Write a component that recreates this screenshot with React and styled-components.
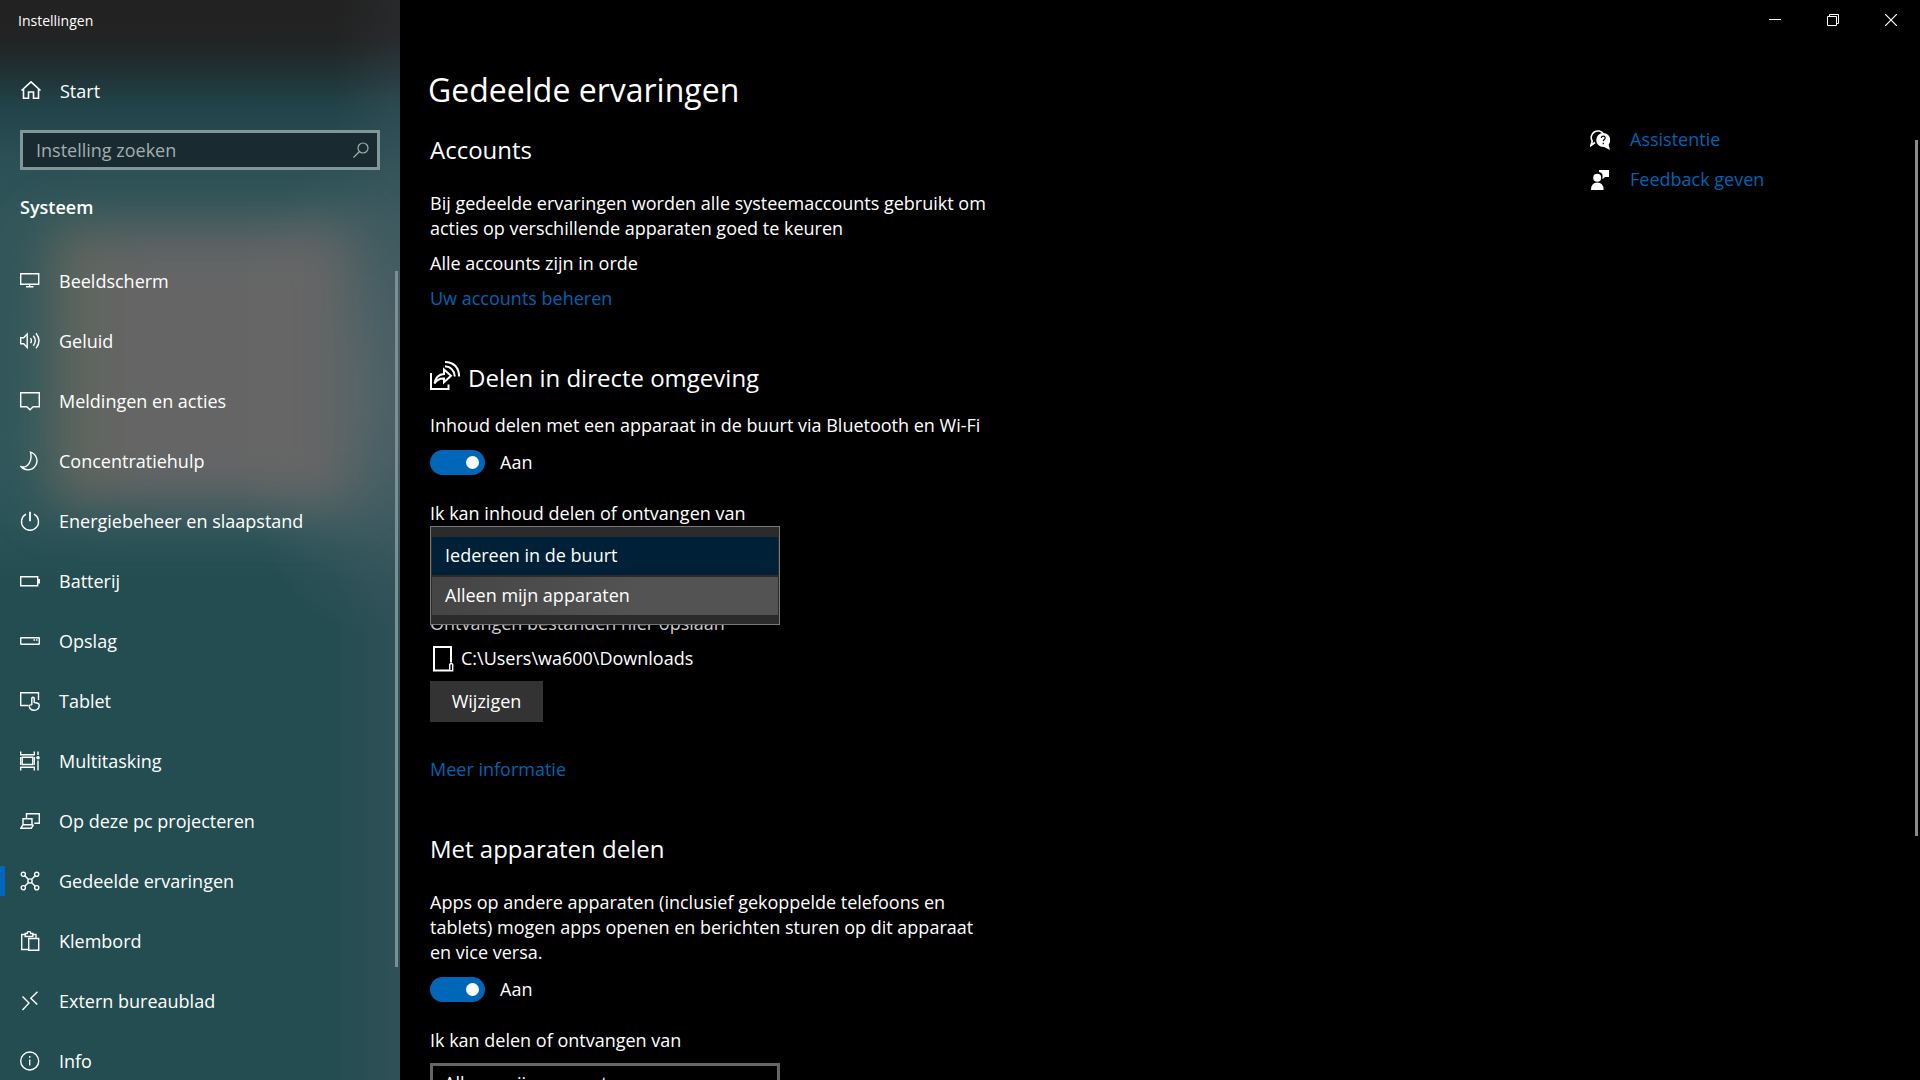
import React, { useState } from "react";
import styled, { createGlobalStyle } from "styled-components";

const GlobalStyle = createGlobalStyle`
  *, *::before, *::after { box-sizing: border-box; }
  body {
    margin: 0;
    background: #000;
    color: #fff;
    font-family: "Open Sans", "Noto Sans", sans-serif;
    font-size: 18px;
    line-height: 25px;
    overflow: hidden;
  }
  button, input, select { font: inherit; color: inherit; }
  h1, h2, p, ul { margin: 0; padding: 0; font-weight: 400; }
`;

const Window = styled.div`
  display: grid;
  grid-template-columns: 400px minmax(0, 1fr);
  height: 100vh;
`;

/* ---------- Sidebar ---------- */

const Sidebar = styled.aside`
  position: relative;
  isolation: isolate;
  display: flex;
  flex-direction: column;
  min-height: 0;
  overflow: hidden;
  background:
    radial-gradient(ellipse 130px 240px at 360px 390px, rgba(96, 108, 114, 0.6), transparent),
    linear-gradient(90deg, transparent 84%, rgba(72, 88, 98, 0.28) 98%),
    linear-gradient(180deg, #222 0, #232526 38px, #1f3539 68px, #22444a 110px, #2b5055 160px, #31565a 220px, #31585c 440px, #2b5459 520px, #244d52 580px, #244d52 100%);

  &::before {
    content: "";
    position: absolute;
    z-index: -1;
    left: 50px;
    right: 46px;
    top: 226px;
    height: 280px;
    background: linear-gradient(90deg, #60665b, #656566 30%, #666);
    filter: blur(25px);
  }

  &::after {
    content: "";
    position: absolute;
    z-index: -1;
    inset: 0 0 auto;
    height: 100px;
    background: linear-gradient(180deg, #222 30%, rgba(34, 34, 34, 0));
    opacity: 0.6;
  }
`;

const AppTitle = styled.div`
  height: 40px;
  padding: 1px 18px 0;
  font-size: 14px;
  line-height: 40px;
`;

const HomeLink = styled.a`
  display: flex;
  align-items: center;
  gap: 18px;
  height: 60px;
  margin-top: 21px;
  padding: 0 20px;
  color: inherit;
  text-decoration: none;
`;

const SearchBox = styled.label`
  display: flex;
  align-items: center;
  flex: none;
  height: 40px;
  margin: 9px 20px 0;
  padding: 0 8px 0 13px;
  border: 3px solid #7f9798;
  background: #192b31;
  color: #a3adb0;
`;

const SearchInput = styled.input`
  flex: 1;
  min-width: 0;
  padding: 0;
  border: 0;
  outline: 0;
  background: none;
  &::placeholder { color: #a3adb0; opacity: 1; }
`;

const Category = styled.h2`
  padding: 25px 20px 31px;
  font-size: 18px;
  line-height: 25px;
  font-weight: 600;
`;

const NavArea = styled.div`
  display: flex;
  flex: 1;
  min-height: 0;
`;

const NavList = styled.ul`
  flex: 1;
  min-width: 0;
  list-style: none;
  overflow: hidden;
`;

const NavLink = styled.a`
  display: flex;
  align-items: center;
  gap: 14px;
  height: 60px;
  color: inherit;
  text-decoration: none;

  &::before {
    content: "";
    width: 5px;
    height: 30px;
    background: ${(p) => (p.$active ? "#0067c0" : "transparent")};
  }

  svg { margin: 0 5px 0 1px; }
`;

const Track = styled.div`
  flex: none;
  width: ${(p) => p.$width}px;
  padding-top: 20px;
`;

const Thumb = styled.div`
  width: 3px;
  height: ${(p) => p.$size};
  background: ${(p) => p.$color};
`;

/* ---------- Main pane ---------- */

const Main = styled.main`
  display: flex;
  flex-direction: column;
  min-height: 0;
  overflow: hidden;
`;

const Caption = styled.div`
  display: flex;
  justify-content: flex-end;
  flex: none;
  height: 40px;
`;

const CaptionButton = styled.button`
  display: grid;
  place-items: center;
  width: 58px;
  height: 40px;
  padding: 0;
  border: 0;
  background: none;
`;

const PageTitle = styled.h1`
  flex: none;
  padding: 27px 28px 7px;
  font-size: 32px;
  line-height: 46px;
`;

const Body = styled.div`
  display: flex;
  flex: 1;
  min-height: 0;
`;

const Columns = styled.div`
  display: flex;
  justify-content: space-between;
  flex: 1;
  min-width: 0;
  overflow: hidden;
  padding: 7px 0 0 30px;
`;

const Content = styled.div`
  flex: 0 1 560px;
  padding-top: 6px;
`;

const Section = styled.section`
  display: flex;
  flex-direction: column;
  align-items: flex-start;
  & + & { margin-top: 50px; }
`;

const Heading = styled.h2`
  display: flex;
  align-items: flex-start;
  gap: 8px;
  margin-bottom: ${(p) => p.$gap}px;
  font-size: 24px;
  line-height: 34px;
`;

const Stack = styled.div`
  display: flex;
  flex-direction: column;
  align-items: flex-start;
  gap: 10px;
`;

const Link = styled.a`
  color: #0063b1;
  text-decoration: none;
`;

const MoreLink = styled(Link)`
  margin-top: 35px;
`;

const ToggleLabel = styled.label`
  display: flex;
  align-items: center;
  gap: 15px;
  margin: 12px 0 26px;
`;

const ToggleInput = styled.input`
  appearance: none;
  display: flex;
  align-items: center;
  justify-content: ${(p) => (p.checked ? "flex-end" : "flex-start")};
  width: 55px;
  height: 25px;
  margin: 0;
  padding: 0 6px;
  border-radius: 13px;
  background: ${(p) => (p.checked ? "#0067b8" : "#333")};
  &::before {
    content: "";
    width: 13px;
    height: 13px;
    border-radius: 50%;
    background: #fff;
  }
`;

const Field = styled.div`
  position: relative;
  width: 350px;
  margin-top: 10px;
`;

const Select = styled.select`
  appearance: none;
  display: block;
  width: 100%;
  height: 40px;
  padding: 0 11px;
  border: 3px solid #666;
  border-radius: 0;
  outline: 0;
  background: #000;
`;

const Popup = styled.div`
  position: absolute;
  z-index: 1;
  inset: -10px 0 auto;
  display: flex;
  flex-direction: column;
  gap: 2px;
  padding: 10px 1px 9px;
  border: 1px solid #777;
  background: #2b2b2b;
`;

const Option = styled.button`
  height: 38px;
  padding: 0 13px 2px;
  border: 0;
  text-align: left;
  background: ${(p) => (p.$selected ? "#002038" : "linear-gradient(100deg, #444, #535353 60%)")};
`;

const SaveBlock = styled(Stack)`
  margin-top: 35px;
`;

const SaveLabel = styled.p`
  color: #ccc;
`;

const Path = styled.div`
  display: flex;
  align-items: center;
  gap: 7px;
  height: 25px;
  padding-left: 3px;
`;

const Button = styled.button`
  min-width: 113px;
  height: 41px;
  padding: 0 20px;
  border: 0;
  background: #333;
`;

const Related = styled.nav`
  display: flex;
  flex-direction: column;
  gap: 15px;
  flex: none;
  width: 325px;
`;

const RelatedLink = styled(Link)`
  display: flex;
  align-items: center;
  gap: 20px;
  svg { color: #fff; }
`;

/* ---------- Icons ---------- */

const IconSvg = styled.svg`
  display: block;
  flex: none;
  fill: none;
  stroke: currentColor;
  stroke-width: ${(p) => p.$stroke || 1.4};
`;

const Icon = ({ size = 20, stroke, children }) => (
  <IconSvg width={size} height={size} viewBox={`0 0 ${size} ${size}`} $stroke={stroke} aria-hidden="true">
    {children}
  </IconSvg>
);

const icons = {
  home: <path d="M1.5 10.5 11 1.8l9.500 8.700M3.500 9v9.300h5V12h5v6.300h5V9" />,
  display: <path d="M.7 2.700h18v10.500H.7zM9.700 13.200v2.300M6 15.700h7.500" />,
  sound: <path d="M.7 6.800h3L7.200 3v13.500l-3.500-3.800h-3zM10.500 7.200q1.800 2.500 0 5M13.300 4.800q4 5 0 10M16 2.300q6 7.500 0 15" />,
  message: <path d="M.7 1.700h18.600v14h-6.100l-3.200 3-3.200-3H.7z" />,
  moon: <path d="M10.500 1.200a9 9 0 1 1-9.300 14.600c6.500 1.500 11.500-6 9.300-14.600z" />,
  power: <><path d="M6 3.200a8.500 8.500 0 1 0 8 0" /><path d="M10 .8v9.500" strokeWidth="1.800" /></>,
  battery: <><path d="M.7 5.700h17v9H.7z" /><path d="M19 8v4.400" strokeWidth="2" /></>,
  storage: <><rect x=".7" y="6.700" width="18.600" height="6.600" rx=".6" /><path d="M13.500 9h1.500M16 9h1.500" /></>,
  tablet: <><path d="M8.500 14.500H.7V1.700h17.800V9" /><path d="M11.800 14V7q1.200-1.600 2.400 0v4.500l3.600.7q1.500.4 1.400 2.300-.2 4.800-5.200 4.800-3.700 0-4.700-3.500-.6-2.300 2.500-1.800" /></>,
  multitask: <><path d="M.7.500v3.200h13.600V.500M2.200 6.200h10.600v7.300H2.200zM.7 19.500v-3.200h13.600v3.200M18 .500v3.500M18 9.500v10" /><circle cx="18" cy="6.800" r="1.800" fill="currentColor" stroke="none" /><path d="M.7 6v8M14.300 6v8" /></>,
  project: <><path d="M6.500 7V2.700h12.800v9.500h-5" /><path d="M3 7.700h9v6H3zM3 13.700l-2.200 3.600h10.500l2.200-3.600" /></>,
  share: <><circle cx="3.300" cy="3.300" r="2.100" /><circle cx="16.700" cy="3.300" r="2.100" /><circle cx="3.300" cy="16.700" r="2.100" /><circle cx="16.700" cy="16.700" r="2.100" /><circle cx="10" cy="10" r="2.100" /><path d="m4.800 4.800 3.700 3.700m3 3 3.700 3.700m0-10.400-3.700 3.700m-3 3-3.700 3.700" /></>,
  clipboard: <><path d="M8.500 18.500H1.700v-15h3.500M13 3.500h3v3.800M5.200 2.500h2q0-2 1.800-2t1.800 2h2v3H5.200z" /><path d="M8.700 7.500h10v11.800h-10z" /></>,
  remote: <path d="m2.500 5.500 6.500 6.500-6.500 7M17.500.8 10.800 7.300l6.500 6.200" />,
  info: <><circle cx="9.700" cy="10" r="9" /><path d="M9.700 8.500v6M9.700 5v1.700" /></>,
};

const ShareHeadingIcon = () => (
  <Icon size={30} stroke={2}>
    <path d="M1 12v16h17.500v-4.500" />
    <path d="M4.500 22.500q1.500-9 9.500-9.500V8.500l7 6.300-7 6.500v-3.800q-6-.5-9.500 5z" />
    <path d="M15 5.200q9 .8 9.800 10.300M15 1q13.500.5 14.200 14.500" />
  </Icon>
);

const FolderIcon = () => (
  <IconSvg width="21" height="26" viewBox="0 0 21 26" $stroke={2} aria-hidden="true">
    <path d="M16 24.500H1V1h17v15.500" />
    <path d="M16.700 18.500q1.600-2 3 0v6.300h-3z" strokeWidth="1.400" />
  </IconSvg>
);

const HelpIcon = () => (
  <Icon>
    <path d="M5 12.500.8 15.700l1.500-4.500A6.500 6.500 0 1 1 13.500 4" strokeWidth="1.600" />
    <circle cx="13.200" cy="10" r="7" fill="currentColor" stroke="none" />
    <path d="m20 20-1.700-6.500-4.800 3.200z" fill="currentColor" stroke="none" />
    <path d="M11.300 8q.2-1.900 2-1.900t1.900 1.700q0 1.200-1.200 1.900-.7.500-.7 1.600M13.300 12.800v1.400" stroke="#000" strokeWidth="1.200" />
  </Icon>
);

const FeedbackIcon = () => (
  <Icon>
    <g fill="currentColor" stroke="none">
      <path d="M9 0h10v7h-4l-2.500 2.200V4.500Q11.500 2.300 9 2z" />
      <circle cx="7.200" cy="7.700" r="4" />
      <path d="M1 20q0-7.500 6.300-7.500T13.600 20z" />
    </g>
  </Icon>
);

const navItems = [
  ["Beeldscherm", "display"],
  ["Geluid", "sound"],
  ["Meldingen en acties", "message"],
  ["Concentratiehulp", "moon"],
  ["Energiebeheer en slaapstand", "power"],
  ["Batterij", "battery"],
  ["Opslag", "storage"],
  ["Tablet", "tablet"],
  ["Multitasking", "multitask"],
  ["Op deze pc projecteren", "project"],
  ["Gedeelde ervaringen", "share"],
  ["Klembord", "clipboard"],
  ["Extern bureaublad", "remote"],
  ["Info", "info"],
];

const shareOptions = ["Iedereen in de buurt", "Alleen mijn apparaten"];

function Toggle({ label }) {
  const [on, setOn] = useState(true);
  return (
    <ToggleLabel>
      <ToggleInput type="checkbox" role="switch" aria-label={label} checked={on} onChange={() => setOn(!on)} />
      {on ? "Aan" : "Uit"}
    </ToggleLabel>
  );
}

function ShareSelect({ id, initial, initiallyOpen }) {
  const [value, setValue] = useState(initial);
  const [open, setOpen] = useState(initiallyOpen);
  return (
    <Field>
      <Select id={id} value={value} onChange={(e) => setValue(e.target.value)}>
        {shareOptions.map((o) => <option key={o}>{o}</option>)}
      </Select>
      {open && (
        <Popup role="listbox">
          {shareOptions.map((o) => (
            <Option
              key={o}
              type="button"
              role="option"
              aria-selected={o === value}
              $selected={o === value}
              onClick={() => { setValue(o); setOpen(false); }}
            >
              {o}
            </Option>
          ))}
        </Popup>
      )}
    </Field>
  );
}

export default function App() {
  return (
    <>
      <GlobalStyle />
      <Window>
        <Sidebar>
          <AppTitle>Instellingen</AppTitle>
          <HomeLink href="#start"><Icon size={22} stroke={1.6}>{icons.home}</Icon>Start</HomeLink>
          <SearchBox>
            <SearchInput type="text" placeholder="Instelling zoeken" aria-label="Instelling zoeken" />
            <Icon size={16} stroke={1.2}><circle cx="10" cy="6" r="5" /><path d="M6.500 9.500.5 15.500" /></Icon>
          </SearchBox>
          <Category>Systeem</Category>
          <NavArea>
            <NavList>
              {navItems.map(([label, icon]) => (
                <li key={label}>
                  <NavLink href={`#${icon}`} $active={icon === "share"}>
                    <Icon>{icons[icon]}</Icon>
                    {label}
                  </NavLink>
                </li>
              ))}
            </NavList>
            <Track $width={5}><Thumb $size="86%" $color="#7b9094" /></Track>
          </NavArea>
        </Sidebar>

        <Main>
          <Caption>
            <CaptionButton type="button" aria-label="Minimaliseren">
              <Icon size={12} stroke={1}><path d="M0 5.500h12" /></Icon>
            </CaptionButton>
            <CaptionButton type="button" aria-label="Verkleinen">
              <Icon size={12} stroke={1}><path d="M.5 2.500h9v9h-9zM2.500 2.500v-2h9v9h-2" /></Icon>
            </CaptionButton>
            <CaptionButton type="button" aria-label="Sluiten">
              <Icon size={12} stroke={1.2}><path d="m0 0 12 12M12 0 0 12" /></Icon>
            </CaptionButton>
          </Caption>
          <PageTitle>Gedeelde ervaringen</PageTitle>
          <Body>
            <Columns>
              <Content>
                <Section>
                  <Heading $gap={24}>Accounts</Heading>
                  <Stack>
                    <p>Bij gedeelde ervaringen worden alle systeemaccounts gebruikt om acties op verschillende apparaten goed te keuren</p>
                    <p>Alle accounts zijn in orde</p>
                    <Link href="#accounts">Uw accounts beheren</Link>
                  </Stack>
                </Section>

                <Section>
                  <Heading $gap={18}><ShareHeadingIcon />Delen in directe omgeving</Heading>
                  <p>Inhoud delen met een apparaat in de buurt via Bluetooth en Wi-Fi</p>
                  <Toggle label="Delen in directe omgeving" />
                  <label htmlFor="nearby">Ik kan inhoud delen of ontvangen van</label>
                  <ShareSelect id="nearby" initial={shareOptions[0]} initiallyOpen />
                  <SaveBlock>
                    <SaveLabel>Ontvangen bestanden hier opslaan</SaveLabel>
                    <Path><FolderIcon />C:\Users\wa600\Downloads</Path>
                    <Button type="button">Wijzigen</Button>
                  </SaveBlock>
                  <MoreLink href="#info">Meer informatie</MoreLink>
                </Section>

                <Section>
                  <Heading $gap={24}>Met apparaten delen</Heading>
                  <p>Apps op andere apparaten (inclusief gekoppelde telefoons en tablets) mogen apps openen en berichten sturen op dit apparaat en vice versa.</p>
                  <Toggle label="Met apparaten delen" />
                  <label htmlFor="devices">Ik kan delen of ontvangen van</label>
                  <ShareSelect id="devices" initial={shareOptions[1]} initiallyOpen={false} />
                </Section>
              </Content>
              <Related>
                <RelatedLink href="#help"><HelpIcon />Assistentie</RelatedLink>
                <RelatedLink href="#feedback"><FeedbackIcon />Feedback geven</RelatedLink>
              </Related>
            </Columns>
            <Track $width={5}><Thumb $size="74%" $color="#8a8a8a" /></Track>
          </Body>
        </Main>
      </Window>
    </>
  );
}
